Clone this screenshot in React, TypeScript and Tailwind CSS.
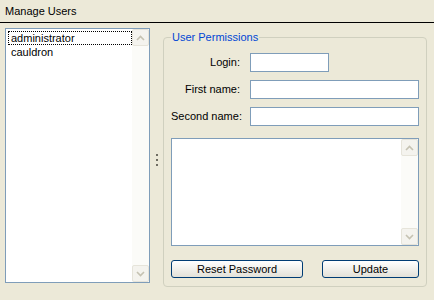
import React from 'react';

function Chevron({ down }: { down?: boolean }) {
    return (
        <svg width="9" height="6" viewBox="0 0 9 6" className={down ? 'rotate-180' : ''}>
            <path d="M1 5 L4.5 1.5 L8 5" fill="none" stroke="#C5C2B2" strokeWidth="1.6" />
        </svg>
    );
}

function ArrowButton({ down }: { down?: boolean }) {
    return (
        <div className="w-[17px] h-[17px] flex items-center justify-center bg-[#F4F3EE] border border-[#E6E4DA] rounded-[2px]">
            <Chevron down={down} />
        </div>
    );
}

function ScrollBar() {
    return (
        <div className="w-[17px] flex flex-col justify-between bg-[#FBFBF8]">
            <ArrowButton />
            <ArrowButton down />
        </div>
    );
}

export default function App() {
    return (
        <div className="w-[434px] h-[300px] bg-[#ECE9D8] flex flex-col font-[family-name:Liberation_Sans,Arial,sans-serif] text-[11px] text-black whitespace-nowrap">
            {/* Title */}
            <div className="h-[23px] border-b border-black px-[5px] flex items-center">Manage Users</div>

            <div className="flex pt-[5px] pl-[5px]">
                {/* User list */}
                <div className="w-[145px] h-[255px] border border-[#7F9DB9] bg-white flex">
                    <div className="flex-1 pt-[2px] pl-[2px] leading-[14px]">
                        <div className="border border-dotted border-black px-[2px] h-[14px] flex items-center">administrator</div>
                        <div className="px-[3px] h-[14px] flex items-center">cauldron</div>
                    </div>
                    <ScrollBar />
                </div>

                {/* Splitter */}
                <div className="w-[13px] flex flex-col items-center justify-center gap-[3px] pt-[5px]">
                    <span className="w-[2px] h-[2px] bg-[#6F6D62]" />
                    <span className="w-[2px] h-[2px] bg-[#6F6D62]" />
                    <span className="w-[2px] h-[2px] bg-[#6F6D62]" />
                </div>

                {/* User permissions group */}
                <fieldset className="w-[264px] h-[256px] mt-[3px] border border-[#D0D0BF] rounded-[4px] px-[7px] pt-[9px]">
                    <legend className="px-[1px] leading-[13px] text-[#0046D5]">User Permissions</legend>

                    <div className="grid grid-cols-[69px_1fr] gap-x-[10px] gap-y-[8px] items-center">
                        <label className="text-right">Login:</label>
                        <input className="w-[79px] h-[19px] border border-[#7F9DB9] bg-white outline-none" />
                        <label className="text-right">First name:</label>
                        <input className="w-full h-[19px] border border-[#7F9DB9] bg-white outline-none" />
                        <label className="text-right">Second name:</label>
                        <input className="w-full h-[19px] border border-[#7F9DB9] bg-white outline-none" />
                    </div>

                    <div className="mt-[12px] h-[108px] border border-[#7F9DB9] bg-white flex">
                        <div className="flex-1" />
                        <ScrollBar />
                    </div>

                    <div className="mt-[14px] flex justify-between">
                        <button className="w-[132px] h-[18px] border border-[#003C74] rounded-[3px] bg-gradient-to-b from-white to-[#E3E1D8] leading-[16px]">
                            Reset Password
                        </button>
                        <button className="w-[97px] h-[18px] border border-[#003C74] rounded-[3px] bg-gradient-to-b from-white to-[#E3E1D8] leading-[16px]">
                            Update
                        </button>
                    </div>
                </fieldset>
            </div>
        </div>
    );
}
